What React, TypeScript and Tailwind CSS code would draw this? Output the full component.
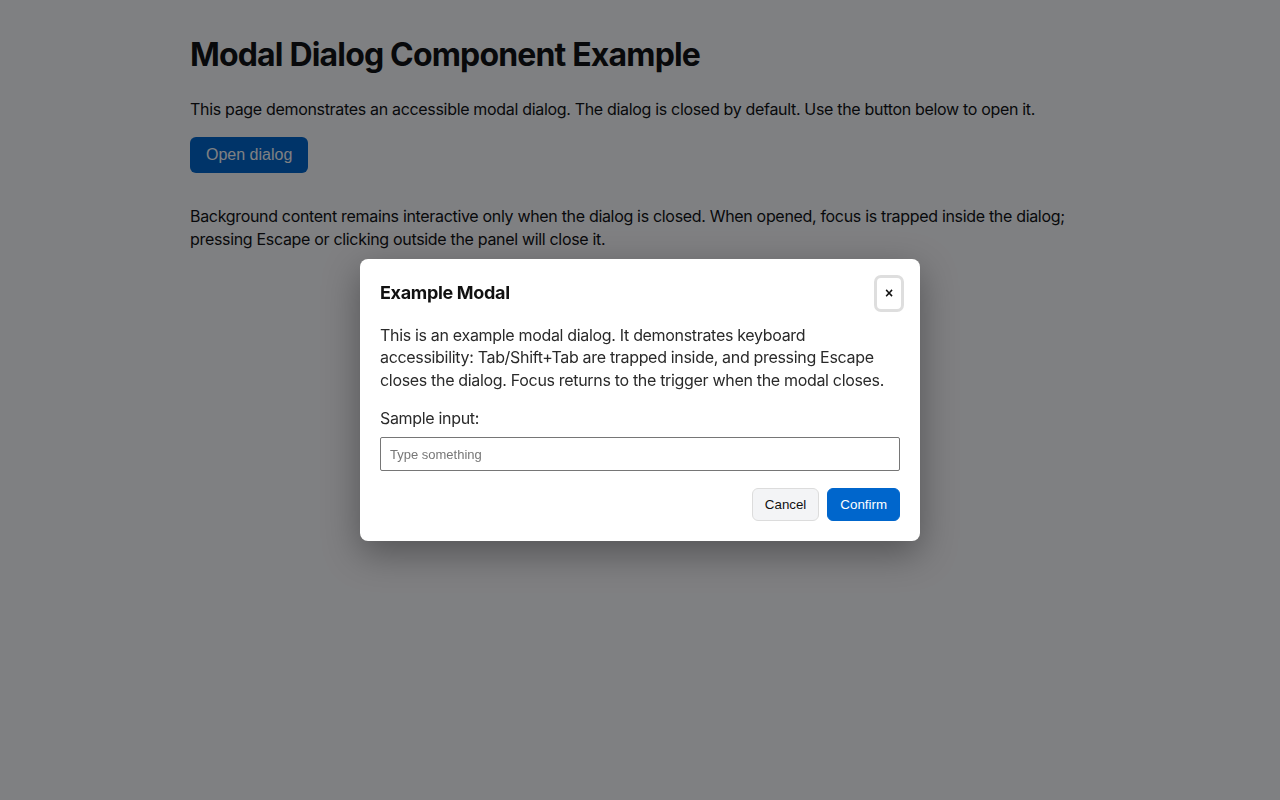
export default function App() {
  return (
    <div className="relative min-h-screen bg-white font-['Inter','Noto_Sans',sans-serif] tracking-[-0.02em] text-[#111]">
      {/* Page content */}
      <main className="mx-auto max-w-[900px] pt-[36px]">
        <h1 className="text-[32px] font-bold leading-[38px] tracking-[-0.026em]">
          Modal Dialog Component Example
        </h1>
        <p className="mt-[23px] text-[16px] leading-[24px]">
          This page demonstrates an accessible modal dialog. The dialog is closed by default. Use the button below to
          open it.
        </p>
        <button className="mt-4 h-[36px] rounded-[6px] bg-[#0066cc] px-4 font-['Liberation_Sans',Arial,sans-serif] text-[16px] tracking-normal text-white">
          Open dialog
        </button>
        <p className="mt-[32px] text-[16px] leading-[23px]">
          Background content remains interactive only when the dialog is closed. When opened, focus is trapped inside
          the dialog; pressing Escape or clicking outside the panel will close it.
        </p>
      </main>

      {/* Overlay */}
      <div className="fixed inset-0 flex items-center justify-center bg-[rgba(0,1,6,0.5)]">
        <div
          role="dialog"
          aria-modal="true"
          className="w-[560px] rounded-[8px] bg-white px-5 pb-5 pt-4 shadow-[0_12px_36px_rgba(0,0,0,0.35)]"
        >
          <div className="flex items-center justify-between">
            <h2 className="text-[18px] font-bold leading-[24px] text-[#111]">Example Modal</h2>
            <button
              aria-label="Close"
              className="-mr-1 flex h-[37px] w-[30px] items-center justify-center rounded-[7px] border-[3px] border-[#dedede] bg-white font-['Liberation_Sans',Arial,sans-serif] text-[14px] font-bold leading-none tracking-normal text-[#111]"
            >
              ×
            </button>
          </div>
          <p className="mt-3 text-[16px] leading-[22.5px] text-[#2a2a2a]">
            This is an example modal dialog. It demonstrates keyboard accessibility: Tab/Shift+Tab are trapped inside,
            and pressing Escape closes the dialog. Focus returns to the trigger when the modal closes.
          </p>
          <label className="mt-4 block text-[16px] leading-[22px] text-[#2a2a2a]">
            Sample input:
            <input
              type="text"
              placeholder="Type something"
              className="mt-2 block h-[34px] w-full rounded-[2px] border border-[#767676] px-[9px] font-['Liberation_Sans',Arial,sans-serif] text-[13px] tracking-normal text-[#111] placeholder:text-[#777] outline-none"
            />
          </label>
          <div className="mt-[17px] flex justify-end gap-2 font-['Liberation_Sans',Arial,sans-serif] text-[13.33px] tracking-normal">
            <button className="h-[33px] rounded-[6px] border border-[#dcdcdc] bg-[#f3f4f6] px-3 text-[#111]">
              Cancel
            </button>
            <button className="h-[33px] rounded-[6px] border border-[#0066cc] bg-[#0066cc] px-3 text-white">
              Confirm
            </button>
          </div>
        </div>
      </div>
    </div>
  )
}
